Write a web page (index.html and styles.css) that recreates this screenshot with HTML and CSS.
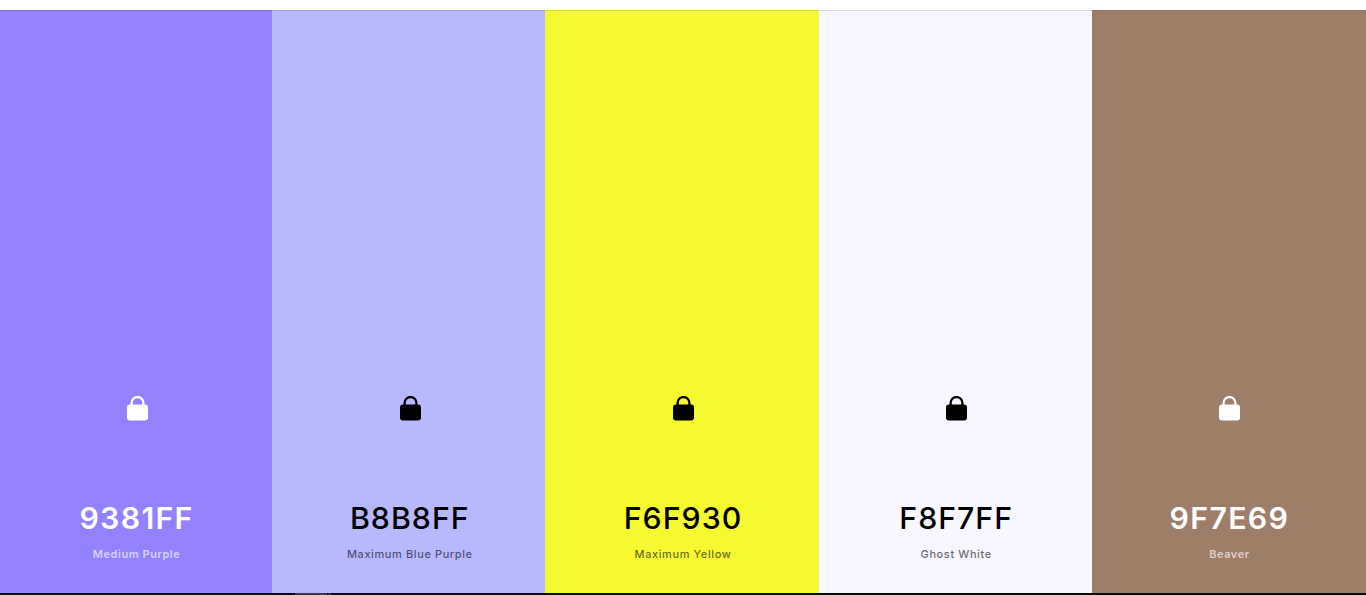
FILE: index.html
```html
<!DOCTYPE html>
<html lang="en">
<head>
<meta charset="utf-8">
<title>Palette</title>
<link rel="stylesheet" href="styles.css">
</head>
<body>
<main class="palette">
  <section class="swatch swatch-purple light">
    <svg class="lock" viewBox="0 0 21 25" aria-hidden="true"><path class="shackle" d="M4.6 11V6.9a5.9 5.9 0 0 1 11.8 0V11"/><rect class="body" x="0" y="8.4" width="21" height="16.2" rx="3"/></svg>
    <h2 class="hex">9381FF</h2>
    <p class="name">Medium Purple</p>
  </section>
  <section class="swatch swatch-blue dark">
    <svg class="lock" viewBox="0 0 21 25" aria-hidden="true"><path class="shackle" d="M4.6 11V6.9a5.9 5.9 0 0 1 11.8 0V11"/><rect class="body" x="0" y="8.4" width="21" height="16.2" rx="3"/></svg>
    <h2 class="hex">B8B8FF</h2>
    <p class="name">Maximum Blue Purple</p>
  </section>
  <section class="swatch swatch-yellow dark">
    <svg class="lock" viewBox="0 0 21 25" aria-hidden="true"><path class="shackle" d="M4.6 11V6.9a5.9 5.9 0 0 1 11.8 0V11"/><rect class="body" x="0" y="8.4" width="21" height="16.2" rx="3"/></svg>
    <h2 class="hex">F6F930</h2>
    <p class="name">Maximum Yellow</p>
  </section>
  <section class="swatch swatch-ghost dark">
    <svg class="lock" viewBox="0 0 21 25" aria-hidden="true"><path class="shackle" d="M4.6 11V6.9a5.9 5.9 0 0 1 11.8 0V11"/><rect class="body" x="0" y="8.4" width="21" height="16.2" rx="3"/></svg>
    <h2 class="hex">F8F7FF</h2>
    <p class="name">Ghost White</p>
  </section>
  <section class="swatch swatch-beaver light">
    <svg class="lock" viewBox="0 0 21 25" aria-hidden="true"><path class="shackle" d="M4.6 11V6.9a5.9 5.9 0 0 1 11.8 0V11"/><rect class="body" x="0" y="8.4" width="21" height="16.2" rx="3"/></svg>
    <h2 class="hex">9F7E69</h2>
    <p class="name">Beaver</p>
  </section>
</main>
<div class="bottom-bar"><span class="thumb"></span><span class="thumb-end"></span></div>
</body>
</html>
```
FILE: styles.css
```css
* { box-sizing: border-box; }
html, body { margin: 0; height: 100%; }
body {
  display: flex;
  flex-direction: column;
  height: 595px;
  padding-top: 10px;
  background: #fff;
  overflow: hidden;
  font-family: Inter, "Liberation Sans", sans-serif;
}
.palette {
  flex: 1;
  display: grid;
  grid-template-columns: repeat(5, 1fr);
  min-height: 0;
}
.swatch {
  display: flex;
  flex-direction: column;
  align-items: center;
  border-top: 1px solid rgba(0, 0, 0, 0.12);
  padding-top: 385px;
}
.swatch-purple { background: #9381ff; box-shadow: -1px 0 0 #9381ff; }
.swatch-blue { background: #b8b8ff; box-shadow: -1px 0 0 #b8b8ff; }
.swatch-yellow { background: #f6f930; box-shadow: -1px 0 0 #f6f930; }
.swatch-ghost { background: #f8f7ff; box-shadow: -1px 0 0 #f8f7ff; }
.swatch-beaver { background: #9f7e69; box-shadow: -1px 0 0 #9f7e69; }
.lock { width: 21px; height: 25px; display: block; margin-left: 1px; }
.shackle { fill: none; stroke-width: 2.3; }
.light .shackle { stroke: #fff; }
.dark .shackle { stroke: #000; }
.light .body { fill: #fff; }
.dark .body { fill: #000; }
.hex {
  margin: 77px 0 0;
  font-size: 30.3px;
  line-height: 40px;
  font-weight: 600;
  letter-spacing: 1.3px;
}
.dark .hex { color: #000; font-weight: 500; letter-spacing: 1px; }
.light .hex { color: #fff; }
.name {
  margin: 8px 0 0;
  font-size: 11px;
  line-height: 16px;
  font-weight: 500;
  letter-spacing: 0.6px;
}
.light .name { color: rgba(255, 255, 255, 0.65); font-weight: 600; letter-spacing: 0.55px; }
.dark .name { color: rgba(0, 0, 0, 0.6); }
.bottom-bar {
  flex: 0 0 2px;
  display: flex;
  gap: 1px;
  padding-left: 295px;
  background: #0a0a0a;
}
.thumb { width: 32px; background: #3c3c3c; }
.thumb-end { width: 3px; background: #2a2a2a; }
```
